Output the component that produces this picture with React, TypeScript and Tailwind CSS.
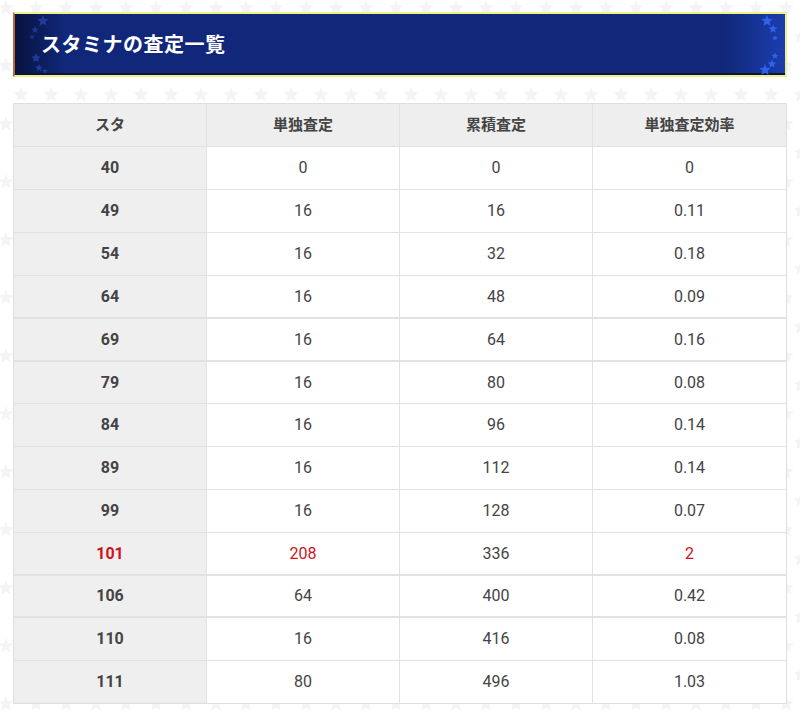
import React from 'react';

const rows = [
  { sta: '40', single: '0', total: '0', eff: '0' },
  { sta: '49', single: '16', total: '16', eff: '0.11' },
  { sta: '54', single: '16', total: '32', eff: '0.18' },
  { sta: '64', single: '16', total: '48', eff: '0.09', thick: true },
  { sta: '69', single: '16', total: '64', eff: '0.16', thick: true },
  { sta: '79', single: '16', total: '80', eff: '0.08', short: true },
  { sta: '84', single: '16', total: '96', eff: '0.14' },
  { sta: '89', single: '16', total: '112', eff: '0.14' },
  { sta: '99', single: '16', total: '128', eff: '0.07' },
  { sta: '101', single: '208', total: '336', eff: '2', hot: true, thick: true },
  { sta: '106', single: '64', total: '400', eff: '0.42', thick: true, short: true },
  { sta: '110', single: '16', total: '416', eff: '0.08' },
  { sta: '111', single: '80', total: '496', eff: '1.03', last: true },
];

const Star = ({ x, y, r, fill }: { x: number; y: number; r: number; fill: string }) => {
  const pts: string[] = [];
  for (let i = 0; i < 10; i++) {
    const a = -Math.PI / 2 + (i * Math.PI) / 5;
    const rr = i % 2 === 0 ? r : r * 0.45;
    pts.push(`${(x + rr * Math.cos(a)).toFixed(2)},${(y + rr * Math.sin(a)).toFixed(2)}`);
  }
  return <polygon points={pts.join(' ')} fill={fill} />;
};

const StarBackdrop = () => {
  const stars: React.ReactNode[] = [];
  for (let row = 0; row < 26; row++) {
    for (let col = 0; col < 29; col++) {
      const x = col * 30 + (row % 2 ? 15 : 0) + 6;
      const y = row * 29 + 8;
      stars.push(<Star key={`${row}-${col}`} x={x} y={y} r={8} fill="#f4f4f4" />);
    }
  }
  return (
    <svg className="absolute inset-0 -z-10" width="800" height="719" aria-hidden>
      {stars}
    </svg>
  );
};

export default function App() {
  return (
    <div
      className="relative isolate w-[800px] h-[719px] overflow-hidden bg-white px-[13px] pt-[12px]"
      style={{ fontFamily: 'Roboto, "Noto Sans CJK JP", sans-serif' }}
    >
      <StarBackdrop />

      {/* Title banner */}
      <div className="relative h-[65px] border-2 border-[#eef08a] border-l-[#b5683a] bg-[linear-gradient(to_right,#07123d_0px,#11287a_50px,#11287a_calc(100%-60px),#1b3eae_100%)] shadow-[inset_0_-2px_0_#0b1638]">
        <svg className="absolute left-0 top-0" width="40" height="61" aria-hidden>
          <Star x={28} y={7} r={6} fill="#1e3c9e" />
          <Star x={20} y={16} r={4} fill="#1a3490" />
          <Star x={17} y={23} r={3} fill="#1a3490" />
          <Star x={21} y={44} r={5} fill="#1e3c9e" />
          <Star x={24} y={54} r={4} fill="#1e3c9e" />
          <Star x={30} y={57} r={3} fill="#1e3c9e" />
        </svg>
        <svg className="absolute right-0 top-0" width="30" height="61" aria-hidden>
          <Star x={12} y={7} r={6} fill="#2f62ec" />
          <Star x={18} y={15} r={4.5} fill="#2f62ec" />
          <Star x={20} y={24} r={3} fill="#2f62ec" />
          <Star x={20} y={42} r={3.5} fill="#2f62ec" />
          <Star x={17} y={50} r={4.5} fill="#2f62ec" />
          <Star x={10} y={56} r={6} fill="#2f62ec" />
        </svg>
        <h2 className="relative flex h-full items-center pl-[26px] text-[20px] font-bold tracking-[0.5px] text-white">
          スタミナの査定一覧
        </h2>
      </div>

      {/* Table */}
      <div className="mt-[26px] border border-[#dedede] bg-white text-[16px] text-[#444]">
        <div className="grid h-[43px] grid-cols-4 border-b border-[#e2e2e2] bg-[#eeeeee] text-[15px] font-bold text-[#444]">
          <div className="flex items-center justify-center border-r border-[#e2e2e2]">スタ</div>
          <div className="flex items-center justify-center border-r border-[#e2e2e2]">単独査定</div>
          <div className="flex items-center justify-center border-r border-[#e2e2e2]">累積査定</div>
          <div className="flex items-center justify-center">単独査定効率</div>
        </div>
        {rows.map((r) => (
          <div
            key={r.sta}
            className={`grid grid-cols-4 ${r.last ? 'h-[42px]' : r.short ? 'h-[42px]' : 'h-[43px]'} ${r.last ? '' : r.thick ? 'border-b-2 border-[#e2e2e2]' : 'border-b border-[#e2e2e2]'} ${r.hot ? 'text-[#d0121b]' : ''}`}
          >
            <div className="flex items-center justify-center border-r border-[#e2e2e2] bg-[#efefef] font-bold">{r.sta}</div>
            <div className="flex items-center justify-center border-r border-[#e2e2e2]">{r.single}</div>
            <div className={`flex items-center justify-center border-r border-[#e2e2e2] ${r.hot ? 'text-[#444]' : ''}`}>{r.total}</div>
            <div className="flex items-center justify-center">{r.eff}</div>
          </div>
        ))}
      </div>
    </div>
  );
}
